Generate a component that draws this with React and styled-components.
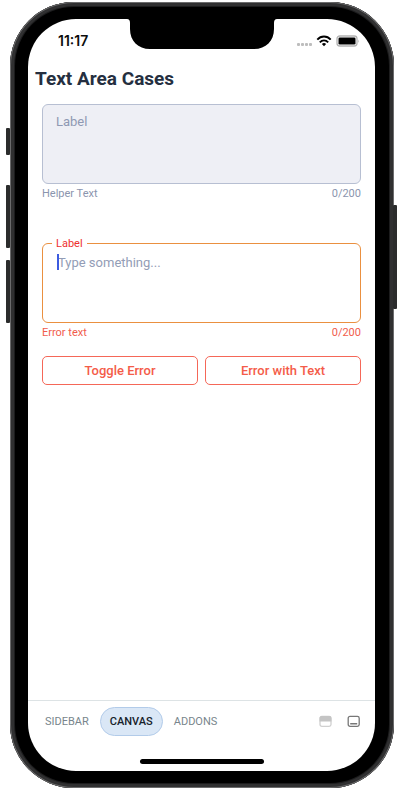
import React from "react";
import styled, { createGlobalStyle } from "styled-components";

const GlobalStyle = createGlobalStyle`
  *, *::before, *::after { box-sizing: border-box; }
  body {
    margin: 0;
    background: #fff;
    font-family: Roboto, "Noto Sans", sans-serif;
  }
`;

const Stage = styled.div`
  display: flex;
  min-height: 100vh;
  padding: 2px 7px 3px 10px;
`;

const Phone = styled.div`
  position: relative;
  flex: 1;
  display: flex;
  padding: 17px 19px 17px 18px;
  border-radius: 64px;
  background: #000;
  box-shadow: inset 0 0 0 1px #6c6c6d, inset 0 0 0 4px #303031, inset 0 0 0 5px #1c1c1d;
`;

const SideKey = styled.span`
  position: absolute;
  top: ${(p) => p.$top}px;
  ${(p) => (p.$right ? "right: -3px;" : "left: -4px;")}
  width: 4px;
  height: ${(p) => p.$length}px;
  border-radius: 1px;
  background: #2b2c2c;
`;

const Screen = styled.main`
  flex: 1;
  min-width: 0;
  display: flex;
  flex-direction: column;
  overflow: hidden;
  border-radius: 48px;
  background: #fff;
`;

const StatusBar = styled.header`
  display: grid;
  grid-template-columns: 1fr 150px 1fr;
  height: 44px;
`;

const Clock = styled.time`
  padding: 13px 0 0 30px;
  font: 600 14px/18px Inter, sans-serif;
  color: #0c0c0c;
`;

const StatusIcons = styled.div`
  display: flex;
  justify-content: flex-end;
  padding: 16px 15px 0 0;
`;

const Title = styled.h1`
  margin: 0;
  padding: 4px 7px 0;
  font-size: 19px;
  line-height: 24px;
  font-weight: 700;
  color: #252f40;
`;

const Form = styled.form`
  display: flex;
  flex-direction: column;
  padding: 13px 14px 0;
`;

const Field = styled.div`
  position: relative;
  margin-bottom: ${(p) => (p.$last ? 15 : 41)}px;
`;

const AreaInput = styled.textarea`
  display: block;
  width: 100%;
  height: 80px;
  padding: 10px 15px;
  resize: none;
  outline: none;
  border: 1px solid ${(p) => (p.$error ? "#ea9040" : "#b7bfd2")};
  border-radius: 6px;
  background: ${(p) => (p.$error ? "#fff" : "#eeeff5")};
  font: 400 13px/18px Roboto, sans-serif;
  color: #252f40;
  &::placeholder { color: #939db6; opacity: 1; }
`;

const InnerLabel = styled.label`
  position: absolute;
  top: 9px;
  left: 14px;
  font-size: 13px;
  line-height: 18px;
  color: #8f99b3;
`;

const FloatingLabel = styled.label`
  position: absolute;
  top: -6px;
  left: 10px;
  padding: 0 4px;
  background: #fff;
  font-size: 11px;
  line-height: 14px;
  color: #ee3030;
`;

const Caret = styled.span`
  position: absolute;
  top: 11px;
  left: 15px;
  width: 2px;
  height: 16px;
  background: #3c5be0;
`;

const Meta = styled.div`
  display: flex;
  justify-content: space-between;
  padding-top: 2px;
  font-size: 11px;
  line-height: 16px;
  color: ${(p) => (p.$error ? "#f15c4c" : "#8b95ae")};
`;

const Actions = styled.div`
  display: grid;
  grid-template-columns: 1fr 1fr;
  gap: 7px;
`;

const OutlineButton = styled.button`
  height: 29px;
  padding: 0;
  border: 1px solid #f56758;
  border-radius: 5px;
  background: #fff;
  font: 500 13px/18px Roboto, sans-serif;
  color: #f45c49;
`;

const BottomBar = styled.nav`
  display: flex;
  align-items: center;
  gap: 1px;
  margin-top: auto;
  height: 42px;
  padding: 0 14px 0 7px;
  border-top: 1px solid #dde3e5;
`;

const Tab = styled.button`
  height: 29px;
  padding: 0 9px;
  border: 1px solid ${(p) => (p.$active ? "#b2cbe9" : "transparent")};
  border-radius: 15px;
  background: ${(p) => (p.$active ? "#dae7f6" : "transparent")};
  font: ${(p) => (p.$active ? 500 : 400)} 11px/16px Roboto, sans-serif;
  color: ${(p) => (p.$active ? "#17212a" : "#78858c")};
`;

const Tools = styled.div`
  display: flex;
  gap: 14px;
  margin-left: auto;
`;

const IconButton = styled.button`
  display: flex;
  padding: 0;
  border: 0;
  background: none;
`;

const HomeArea = styled.footer`
  display: flex;
  justify-content: center;
  padding: 17px 0 7px;
`;

const HomeIndicator = styled.div`
  width: 124px;
  height: 5px;
  border-radius: 3px;
  background: #000;
`;

const Notch = () => (
  <svg width="150" height="30" viewBox="0 0 150 30" aria-hidden="true">
    <path d="M0 0H150Q147 0 147 4V10C147 22 139 30 127 30H23C11 30 3 22 3 10V4Q3 0 0 0Z" />
  </svg>
);

const StatusGlyphs = () => (
  <svg width="64" height="14" viewBox="0 0 64 14" aria-hidden="true">
    <g fill="#bdbdbd">
      <rect x="1" y="8" width="3" height="3" rx="1" />
      <rect x="5" y="8" width="3" height="3" rx="1" />
      <rect x="9" y="8" width="3" height="3" rx="1" />
      <rect x="13" y="8" width="3" height="3" rx="1" />
    </g>
    <g fill="none" stroke="#000" strokeWidth="1.9">
      <path d="M21.3 4.6C25 .5 31 .5 34.7 4.6" />
      <path d="M23.8 7.3C26.2 4.7 29.8 4.7 32.2 7.3" />
    </g>
    <path d="M25.9 9Q28 7.2 30.1 9L28 11.2Z" />
    <rect x="41" y="1" width="20" height="10" rx="2.8" fill="#fff" stroke="#b3b3b3" strokeWidth="1.3" />
    <rect x="42.5" y="2.5" width="17" height="7" rx="1.3" />
    <path d="M62.3 4.5Q64 6.3 62.3 8Z" fill="#b3b3b3" />
  </svg>
);

const PanelTopIcon = () => (
  <svg width="14" height="14" viewBox="0 0 14 14" aria-hidden="true">
    <rect x="1" y="1.4" width="11" height="10" rx="1.8" fill="#fff" stroke="#d0d0d0" strokeWidth="1.3" />
    <path d="M.6 6.500V2.800Q.6 1 2.400 1H10.600Q12.400 1 12.400 2.800V6.500Z" fill="#c4c4c4" />
  </svg>
);

const PanelBottomIcon = () => (
  <svg width="14" height="14" viewBox="0 0 14 14" aria-hidden="true">
    <rect x="1.2" y="1.4" width="11" height="10" rx="1.8" fill="#fff" stroke="#777" strokeWidth="1.3" />
    <path d="M3.2 8.700H10.200" stroke="#777" strokeWidth="1.400" />
  </svg>
);

export default function App() {
  return (
    <>
      <GlobalStyle />
      <Stage>
        <Phone>
          <SideKey $top={126} $length={27} />
          <SideKey $top={183} $length={63} />
          <SideKey $top={258} $length={63} />
          <SideKey $right $top={203} $length={104} />
          <Screen>
            <StatusBar>
              <Clock>11:17</Clock>
              <Notch />
              <StatusIcons>
                <StatusGlyphs />
              </StatusIcons>
            </StatusBar>
            <Title>Text Area Cases</Title>
            <Form onSubmit={(e) => e.preventDefault()}>
              <Field>
                <AreaInput id="disabled-area" disabled />
                <InnerLabel htmlFor="disabled-area">Label</InnerLabel>
                <Meta>
                  <span>Helper Text</span>
                  <span>0/200</span>
                </Meta>
              </Field>
              <Field $last>
                <AreaInput id="error-area" $error placeholder="Type something..." aria-invalid="true" />
                <FloatingLabel htmlFor="error-area">Label</FloatingLabel>
                <Caret />
                <Meta $error>
                  <span>Error text</span>
                  <span>0/200</span>
                </Meta>
              </Field>
              <Actions>
                <OutlineButton type="button">Toggle Error</OutlineButton>
                <OutlineButton type="button">Error with Text</OutlineButton>
              </Actions>
            </Form>
            <BottomBar>
              <Tab type="button">SIDEBAR</Tab>
              <Tab type="button" $active>CANVAS</Tab>
              <Tab type="button">ADDONS</Tab>
              <Tools>
                <IconButton type="button" aria-label="Toggle top panel">
                  <PanelTopIcon />
                </IconButton>
                <IconButton type="button" aria-label="Toggle bottom panel">
                  <PanelBottomIcon />
                </IconButton>
              </Tools>
            </BottomBar>
            <HomeArea>
              <HomeIndicator />
            </HomeArea>
          </Screen>
        </Phone>
      </Stage>
    </>
  );
}
